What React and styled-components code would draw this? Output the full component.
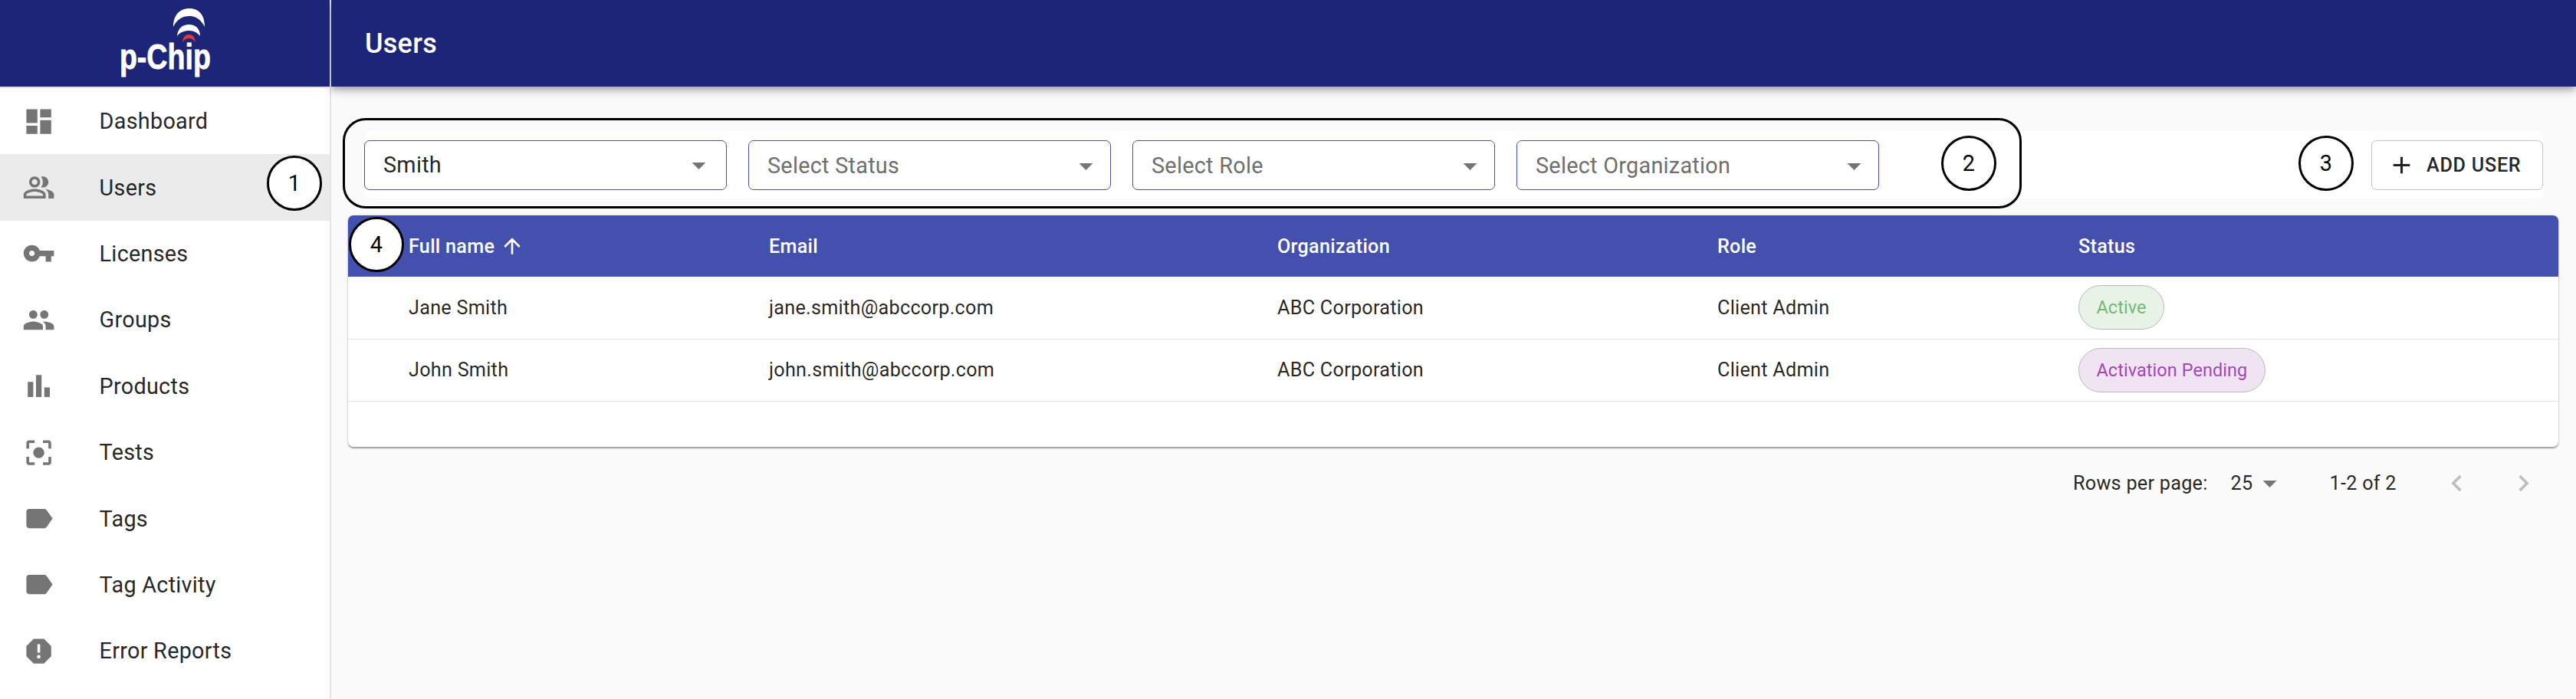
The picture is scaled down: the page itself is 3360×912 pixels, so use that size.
import React from 'react';
import styled, { createGlobalStyle } from 'styled-components';
import {
  MdDashboard, MdOutlinePeopleAlt, MdVpnKey, MdPeople, MdBarChart, MdCenterFocusStrong,
  MdLabel, MdReport, MdAdd, MdArrowUpward, MdArrowDropDown, MdChevronLeft, MdChevronRight,
} from 'react-icons/md';

const GlobalStyle = createGlobalStyle`
  html, body {
    margin: 0;
    padding: 0;
    background: #fafafa;
    font-family: Roboto, "Liberation Sans", sans-serif;
    letter-spacing: 0.27px;
  }
`;

const Page = styled.div`
  display: flex;
  width: 3360px;
  height: 912px;
  overflow: hidden;
  position: relative;
`;

const Sidebar = styled.aside`
  width: 430px;
  flex: none;
  background: #fff;
  border-right: 2px solid #e3e3e3;
`;

const LogoBar = styled.div`
  height: 113px;
  background: #1c2577;
  border-bottom: 2px solid #e3e3e3;
  position: relative;
  display: flex;
  justify-content: center;
`;

const LogoMark = styled.svg`
  position: absolute;
  left: 220px;
  top: 6px;
`;

const LogoText = styled.span`
  margin-top: 44px;
  font: bold 47px/60px "Liberation Sans", sans-serif;
  letter-spacing: 0;
  color: #fff;
  -webkit-text-stroke: 0.8px #fff;
  transform: scaleX(0.8);
`;

const NavRow = styled.div`
  height: 86.4px;
  display: flex;
  align-items: center;
  padding-left: 28.8px;
  font-size: 28.8px;
  color: rgba(0, 0, 0, 0.87);
  background: ${p => (p.$active ? '#ebebeb' : 'transparent')};
  svg {
    flex: none;
    width: 43.2px;
    height: 43.2px;
    color: #757575;
    margin-right: 57.6px;
  }
`;

const Main = styled.main`
  flex: 1;
  min-width: 0;
`;

const TopBar = styled.header`
  height: 113px;
  background: #1c2577;
  display: flex;
  align-items: center;
  padding-left: 44px;
  color: #fff;
  font-size: 36px;
  font-weight: 500;
  box-shadow: 0 3.6px 7.2px -1.8px rgba(0, 0, 0, 0.2), 0 7.2px 9px 0 rgba(0, 0, 0, 0.14), 0 1.8px 18px 0 rgba(0, 0, 0, 0.12);
`;

const Content = styled.div`
  padding: 58px 23px 0 22px;
`;

const Toolbar = styled.div`
  height: 88px;
  margin: 0 20px 22px 21px;
  background: #fff;
  border-radius: 7px;
  display: flex;
  align-items: center;
  gap: 28px;
`;

const Select = styled.div`
  width: 473px;
  height: 65px;
  box-sizing: border-box;
  border: 1.8px solid #4450ad;
  border-radius: 7px;
  padding: ${p => (p.$filled ? '0 14px 0 24px' : '2px 10px 0 24px')};
  display: flex;
  align-items: center;
  justify-content: space-between;
  font-size: 28.8px;
  color: ${p => (p.$filled ? 'rgba(0, 0, 0, 0.87)' : '#6f6f6f')};
  svg {
    width: 43px;
    height: 43px;
    color: #757575;
  }
`;

const AddButton = styled.button`
  margin-left: auto;
  width: 224px;
  height: 65px;
  box-sizing: border-box;
  background: #fff;
  border: 1.8px solid #c4c4c4;
  border-radius: 7px;
  display: flex;
  align-items: center;
  gap: 14px;
  padding: 0 0 0 20px;
  font: 500 25.2px Roboto, sans-serif;
  letter-spacing: 0.72px;
  color: rgba(0, 0, 0, 0.87);
  svg {
    width: 37px;
    height: 37px;
  }
`;

const Table = styled.div`
  height: 302px;
  background: #fff;
  border-radius: 7px;
  overflow: hidden;
  box-shadow: 0 2px 2px rgba(0, 0, 0, 0.35), 0 0 3px rgba(0, 0, 0, 0.12);
`;

const Row = styled.div`
  display: grid;
  grid-template-columns: 470px 663px 574px 471px 1fr;
  align-items: center;
  padding-left: 79px;
  height: ${p => (p.$head ? '80px' : '81.6px')};
  box-sizing: border-box;
  font-size: 25.2px;
  font-weight: ${p => (p.$head ? 500 : 400)};
  color: ${p => (p.$head ? '#fff' : 'rgba(0, 0, 0, 0.87)')};
  background: ${p => (p.$head ? '#4450ad' : 'transparent')};
  border-bottom: ${p => (p.$head ? 'none' : '1.8px solid #e4e4e4')};
`;

const HeadCell = styled.div`
  display: flex;
  align-items: center;
  gap: 7px;
  svg {
    width: 32px;
    height: 32px;
  }
`;

const Chip = styled.span`
  display: inline-flex;
  align-items: center;
  height: 58px;
  box-sizing: border-box;
  padding: 0 22.5px;
  border-radius: 29px;
  font-size: 23.4px;
  letter-spacing: 0.1px;
  border: 1.5px solid #b9b9b9;
  color: ${p => (p.$tone === 'green' ? '#73b973' : '#a346b9')};
  background: ${p => (p.$tone === 'green' ? '#e8f3e8' : '#f0e4f3')};
`;

const Pager = styled.div`
  height: 94px;
  display: flex;
  align-items: center;
  font-size: 25.2px;
  color: rgba(0, 0, 0, 0.87);
  padding-left: 2250px;
`;

const PageSize = styled.div`
  display: flex;
  align-items: center;
  margin-left: 30px;
  width: 129px;
  svg {
    width: 43px;
    height: 43px;
    color: #757575;
    margin-left: 1px;
  }
`;

const PageNav = styled.div`
  display: flex;
  gap: 44px;
  margin-left: 57px;
  svg {
    width: 43px;
    height: 43px;
    color: #bdbdbd;
  }
`;

const Callout = styled.div`
  position: absolute;
  left: ${p => p.$x - 36}px;
  top: ${p => p.$y - 36}px;
  width: 72px;
  height: 72px;
  box-sizing: border-box;
  border: 3px solid #000;
  border-radius: 50%;
  background: #fff;
  display: flex;
  align-items: center;
  justify-content: center;
  font-size: 28.8px;
  color: #000;
`;

const Outline = styled.div`
  position: absolute;
  left: 447px;
  top: 154px;
  width: 2190px;
  height: 118px;
  box-sizing: border-box;
  border: 3px solid #000;
  border-radius: 30px;
`;

const nav = [
  { label: 'Dashboard', Icon: MdDashboard },
  { label: 'Users', Icon: MdOutlinePeopleAlt, active: true },
  { label: 'Licenses', Icon: MdVpnKey },
  { label: 'Groups', Icon: MdPeople },
  { label: 'Products', Icon: MdBarChart },
  { label: 'Tests', Icon: MdCenterFocusStrong },
  { label: 'Tags', Icon: MdLabel },
  { label: 'Tag Activity', Icon: MdLabel },
  { label: 'Error Reports', Icon: MdReport },
];

const users = [
  { name: 'Jane Smith', email: 'jane.smith@abccorp.com', status: 'Active', tone: 'green' },
  { name: 'John Smith', email: 'john.smith@abccorp.com', status: 'Activation Pending', tone: 'purple' },
];

function Logo() {
  return (
    <LogoBar>
      <LogoMark width="60" height="54" viewBox="0 0 60 54">
        <path d="M6 29C6 13 15 5 27 5C39 5 47 13 47 29C42 19 35 15 27 15C18 15 11 19 6 29Z" fill="#fff" />
        <path d="M11 41C12 31 18 26 26.500 26C35 26 41 31 41 41C37 36 32 34 26.500 34C20 34 15 36 11 41Z" fill="#fff" />
        <path d="M18 49C19 42 22 39 26.500 39C31 39 34 42 35 49C32 45 29 44 26.500 44C24 44 21 45 18 49Z" fill="#e53935" />
      </LogoMark>
      <LogoText>p-Chip</LogoText>
    </LogoBar>
  );
}

export default function App() {
  return (
    <>
      <GlobalStyle />
      <Page>
        <Sidebar>
          <Logo />
          {nav.map(({ label, Icon, active }) => (
            <NavRow key={label} $active={active}>
              <Icon />
              {label}
            </NavRow>
          ))}
        </Sidebar>
        <Main>
          <TopBar>Users</TopBar>
          <Content>
            <Toolbar>
              <Select $filled>Smith<MdArrowDropDown /></Select>
              <Select>Select Status<MdArrowDropDown /></Select>
              <Select>Select Role<MdArrowDropDown /></Select>
              <Select>Select Organization<MdArrowDropDown /></Select>
              <AddButton><MdAdd />ADD USER</AddButton>
            </Toolbar>
            <Table>
              <Row $head>
                <HeadCell>Full name<MdArrowUpward /></HeadCell>
                <HeadCell>Email</HeadCell>
                <HeadCell>Organization</HeadCell>
                <HeadCell>Role</HeadCell>
                <HeadCell>Status</HeadCell>
              </Row>
              {users.map(u => (
                <Row key={u.name}>
                  <div>{u.name}</div>
                  <div>{u.email}</div>
                  <div>ABC Corporation</div>
                  <div>Client Admin</div>
                  <div><Chip $tone={u.tone}>{u.status}</Chip></div>
                </Row>
              ))}
            </Table>
            <Pager>
              Rows per page:
              <PageSize>25<MdArrowDropDown /></PageSize>
              1-2 of 2
              <PageNav><MdChevronLeft /><MdChevronRight /></PageNav>
            </Pager>
          </Content>
        </Main>
        <Outline />
        <Callout $x={384} $y={239}>1</Callout>
        <Callout $x={2568} $y={213}>2</Callout>
        <Callout $x={3034} $y={213}>3</Callout>
        <Callout $x={491} $y={319}>4</Callout>
      </Page>
    </>
  );
}
